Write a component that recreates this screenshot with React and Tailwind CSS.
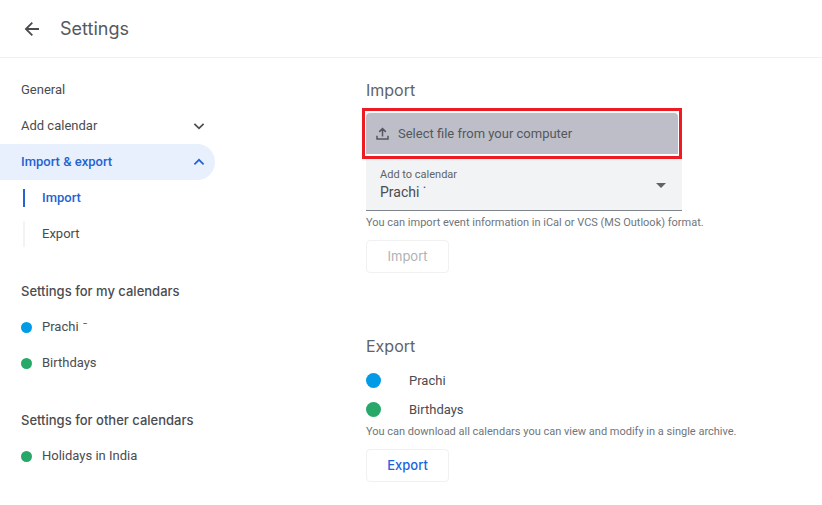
import React, { useState } from 'react';

const MY_CALENDARS = [
  { name: 'Prachi', mark: 'ˉ', color: 'bg-[#039be5]' },
  { name: 'Birthdays', color: 'bg-[#27a869]' },
];

const OTHER_CALENDARS = [{ name: 'Holidays in India', color: 'bg-[#27a869]' }];

const EXPORT_CALENDARS = [
  { name: 'Prachi', color: 'bg-[#039be5]' },
  { name: 'Birthdays', color: 'bg-[#27a869]' },
];

const Chevron = ({ up }) => (
  <svg
    width="12"
    height="12"
    viewBox="0 0 12 12"
    fill="none"
    stroke="currentColor"
    strokeWidth="1.7"
    aria-hidden="true"
  >
    <path d={up ? 'M1.4 8.4 6 3.8l4.6 4.6' : 'M1.4 3.8 6 8.4l4.6-4.6'} />
  </svg>
);

const CalendarGroup = ({ title, calendars }) => (
  <section>
    <h2 className="h-9 pl-[21px] leading-9 font-[Inter,sans-serif] text-[13px] font-medium">
      {title}
    </h2>
    <ul>
      {calendars.map((calendar) => (
        <li key={calendar.name}>
          <a href="#calendar" className="flex h-9 items-center gap-[10px] pl-[21px]">
            <span className={`size-[11px] rounded-full ${calendar.color}`} />
            <span>
              {calendar.name}
              {calendar.mark && <span className="pl-1 text-[11px]">{calendar.mark}</span>}
            </span>
          </a>
        </li>
      ))}
    </ul>
  </section>
);

const Sidebar = () => (
  <nav className="flex w-[215px] shrink-0 flex-col gap-[21px] pt-[14px] text-[13px]">
    <div>
      <a href="#general" className="flex h-9 items-center pl-[21px]">
        General
      </a>
      <button type="button" className="flex h-9 w-full items-center justify-between pr-[10px] pl-[21px]">
        Add calendar
        <Chevron />
      </button>
      <button
        type="button"
        className="flex h-9 w-full items-center justify-between rounded-r-full bg-[#e8f0fe] pr-[10px] pl-[21px] font-medium text-[#2463d1]"
      >
        Import &amp; export
        <Chevron up />
      </button>
      <div className="flex h-9 items-center pl-[23px]">
        <a
          href="#import"
          className="flex h-[18px] items-center border-l-2 border-[#2463d1] pl-[17px] font-medium text-[#2463d1]"
        >
          Import
        </a>
      </div>
      <div className="flex h-9 items-center pl-[23px]">
        <a href="#export" className="flex h-[26px] items-center border-l-2 border-[#f1f3f4] pl-[17px]">
          Export
        </a>
      </div>
    </div>
    <CalendarGroup title="Settings for my calendars" calendars={MY_CALENDARS} />
    <CalendarGroup title="Settings for other calendars" calendars={OTHER_CALENDARS} />
  </nav>
);

const ImportSection = () => {
  const [calendar, setCalendar] = useState('prachi');

  return (
    <section id="import">
      <h2 className="font-[Inter,sans-serif] text-[16px] leading-6 text-[#5f6368]">Import</h2>
      <div className="mt-[6px] -ml-1 w-80 border-[3px] border-[#ed1c24] px-px py-[2px]">
        <button
          type="button"
          className="flex h-[41px] w-full items-center gap-[9px] rounded-t-sm bg-[#bdbec7] pl-[10px] text-[13px] text-[#54575d]"
        >
          <svg width="13" height="13" viewBox="0 0 13 13" fill="none" stroke="currentColor" strokeWidth="1.5" aria-hidden="true">
            <path d="M6.5 9.5V1.6M3.2 4.9l3.3-3.3 3.3 3.3M1 8.8V12h11V8.8" />
          </svg>
          Select file from your computer
        </button>
      </div>
      <div className="relative w-[316px] border-b border-[#80868b] bg-[#f1f3f4] pt-2 pb-[9px]">
        <label htmlFor="target" className="block pl-[14px] text-[11px] leading-4 text-[#5f6368]">
          Add to calendar
        </label>
        <select
          id="target"
          value={calendar}
          onChange={(e) => setCalendar(e.target.value)}
          className="block w-full appearance-none bg-transparent pl-[14px] text-[14px] leading-[18px]"
        >
          <option value="prachi">Prachi ˙</option>
          <option value="birthdays">Birthdays</option>
        </select>
        <svg
          width="10"
          height="5"
          viewBox="0 0 10 5"
          fill="#5f6368"
          className="pointer-events-none absolute top-6 right-4"
          aria-hidden="true"
        >
          <path d="M0 0h10L5 5z" />
        </svg>
      </div>
      <p className="mt-1 text-[11px] leading-4 text-[#70757a]">
        You can import event information in iCal or VCS (MS Outlook) format.
      </p>
      <button
        type="button"
        disabled
        className="mt-[9px] h-[33px] w-[83px] rounded-sm border border-[#f1f1f2] font-[Inter,sans-serif] text-[13px] text-[#b0b1b4]"
      >
        Import
      </button>
    </section>
  );
};

const ExportSection = () => (
  <section id="export" className="mt-[61px]">
    <h2 className="font-[Inter,sans-serif] text-[16px] leading-6 text-[#5f6368]">Export</h2>
    <ul className="mt-2 text-[13px]">
      {EXPORT_CALENDARS.map((calendar) => (
        <li key={calendar.name} className="flex h-[29px] items-center gap-7">
          <span className={`size-[15px] rounded-full ${calendar.color}`} />
          {calendar.name}
        </li>
      ))}
    </ul>
    <p className="text-[11px] leading-4 text-[#70757a]">
      You can download all calendars you can view and modify in a single archive.
    </p>
    <button
      type="button"
      className="mt-[9px] h-[33px] w-[83px] rounded-sm border border-[#f1f1f2] font-[Inter,sans-serif] text-[13px] font-medium text-[#1a63e0]"
    >
      Export
    </button>
  </section>
);

const App = () => (
  <div className="min-h-screen bg-white font-[Roboto,sans-serif] text-[#4a4c50]">
    <header className="flex h-[58px] items-center gap-5 border-b border-[#f0f0f1] pl-6">
      <button type="button" aria-label="Back">
        <svg width="16" height="16" viewBox="0 0 16 16" fill="none" stroke="currentColor" strokeWidth="1.8" aria-hidden="true">
          <path d="M15 8H2M8.3 1.6 1.9 8l6.4 6.4" />
        </svg>
      </button>
      <h1 className="font-[Inter,sans-serif] text-[18px] text-[#55585d]">Settings</h1>
    </header>
    <div className="flex">
      <Sidebar />
      <main className="ml-[151px] flex-1 pt-5">
        <ImportSection />
        <ExportSection />
      </main>
    </div>
  </div>
);

export default App;
